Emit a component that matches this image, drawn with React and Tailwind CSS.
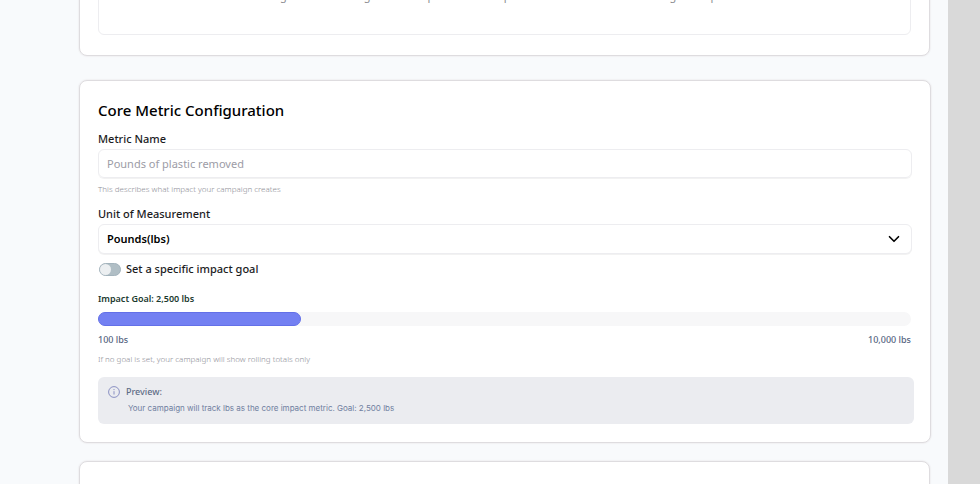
import React, { useState } from "react";
import { ChevronDown } from "lucide-react";

const GOAL_MIN = 100;
const GOAL_MAX = 10000;

const UNITS = [
  { value: "lbs", label: "Pounds(lbs)" },
  { value: "kg", label: "Kilograms(kg)" },
  { value: "tons", label: "Tons(t)" },
];

const Card = ({ className = "", children }) => (
  <section
    className={`rounded-lg border border-[#dedcdf] bg-white px-[18px] shadow-[0_0_1px_1px_#f1f1f3] ${className}`}
  >
    {children}
  </section>
);

const Label = ({ htmlFor, children }) => (
  <label htmlFor={htmlFor} className="block text-[11px] leading-4 font-medium text-[#1c1c1e]">
    {children}
  </label>
);

const Hint = ({ className = "", children }) => (
  <p className={`text-[8px] leading-3 font-light text-[#8e8e96] ${className}`}>{children}</p>
);

const InfoIcon = () => (
  <svg viewBox="0 0 12 12" className="size-3 shrink-0" fill="none" stroke="#7f86bd" aria-hidden="true">
    <circle cx="6" cy="6" r="5.4" strokeWidth="0.9" />
    <path d="M6 5.2v3.3" strokeWidth="0.9" />
    <circle cx="6" cy="3.6" r="0.6" fill="#7f86bd" stroke="none" />
  </svg>
);

const App = () => {
  const [name, setName] = useState("");
  const [unit, setUnit] = useState("lbs");
  const [hasGoal, setHasGoal] = useState(false);
  const [goal, setGoal] = useState(2500);

  const goalText = `${goal.toLocaleString("en-US")} ${unit}`;

  return (
    <div className="flex h-screen overflow-hidden bg-[#d9d9d9] font-['Noto_Sans','Open_Sans',sans-serif]">
      <main className="mr-8 min-w-0 flex-1 bg-[#f8fafc] pr-[18px] pl-[79px]">
        <Card className="-mt-12 pb-5">
          <div className="h-[82px] rounded-md border border-[#ededf0] pt-[34px] text-center text-[11px] leading-4 text-[#8e8e93]">
            Strong statements might even help its team complete each mission without losing some potential
          </div>
        </Card>

        <Card className="mt-6 -mr-px pt-[19px] pb-[18px]">
          <h2 className="text-[15px] leading-5 font-medium text-black">Core Metric Configuration</h2>

          <div className="mt-[11px]">
            <Label htmlFor="metricName">Metric Name</Label>
            <input
              id="metricName"
              type="text"
              value={name}
              onChange={(e) => setName(e.target.value)}
              placeholder="Pounds of plastic removed"
              className="mt-0.5 block h-[29px] w-full rounded-md border border-[#ededf0] px-2 text-[11px] text-black shadow-2xs placeholder:text-[#9c9ca6]"
            />
            <Hint className="mt-[5px]">This describes what impact your campaign creates</Hint>
          </div>

          <div className="mt-[11px]">
            <Label htmlFor="unit">Unit of Measurement</Label>
            <div className="relative mt-0.5">
              <select
                id="unit"
                value={unit}
                onChange={(e) => setUnit(e.target.value)}
                className="block h-[30px] w-full appearance-none rounded-md border border-[#ededf0] bg-white px-2 text-[11px] font-semibold text-black shadow-2xs"
              >
                {UNITS.map((u) => (
                  <option key={u.value} value={u.value}>
                    {u.label}
                  </option>
                ))}
              </select>
              <ChevronDown
                size={18}
                strokeWidth={2.2}
                className="pointer-events-none absolute top-1.5 right-[9px] text-black"
              />
            </div>
          </div>

          <label className="mt-[7px] flex items-center gap-[5px] text-[11px] leading-4 font-medium text-[#1c1c1e]">
            <input
              type="checkbox"
              role="switch"
              checked={hasGoal}
              onChange={(e) => setHasGoal(e.target.checked)}
              className="ml-px h-[13px] w-[22px] appearance-none rounded-full border border-[#a3b3bc] bg-[#b0bec5] before:block before:size-[11px] before:rounded-full before:bg-[#eceff1] checked:bg-[#7380f2] checked:before:ml-[9px]"
            />
            Set a specific impact goal
          </label>

          <label htmlFor="goal" className="mt-4 block text-[9px] leading-3 font-semibold text-[#1b3a2f]">
            Impact Goal: {goalText}
          </label>
          <div className="relative mt-[7px] mr-px h-3.5 rounded-full bg-[#f7f7f8]">
            <div
              className="h-full rounded-full border border-[#6370e8] bg-[#7380f2]"
              style={{ width: `${(goal / GOAL_MAX) * 100}%` }}
            />
            <input
              id="goal"
              type="range"
              min={GOAL_MIN}
              max={GOAL_MAX}
              step={100}
              value={goal}
              onChange={(e) => setGoal(Number(e.target.value))}
              className="absolute inset-0 h-full w-full cursor-pointer opacity-0"
            />
          </div>
          <div className="mt-2 mr-px flex justify-between text-[9px] leading-3 font-medium text-[#56657f]">
            <span>100 {unit}</span>
            <span>10,000 {unit}</span>
          </div>
          <Hint className="mt-[7px]">If no goal is set, your campaign will show rolling totals only</Hint>

          <div className="mt-3 -mr-0.5 rounded-md bg-[#ebecf0] px-[10px] pt-[9px] pb-[10px]">
            <div className="flex items-center gap-1.5 text-[9px] leading-3 font-medium text-[#5f6d87]">
              <InfoIcon />
              Preview:
            </div>
            <p className="mt-1 ml-5 font-['Inter',sans-serif] text-[8px] leading-3 text-[#7080a0]">
              Your campaign will track {unit} as the core impact metric. Goal: {goalText}
            </p>
          </div>
        </Card>

        <Card className="mt-[18px] h-24" />
      </main>
    </div>
  );
};

export default App;
